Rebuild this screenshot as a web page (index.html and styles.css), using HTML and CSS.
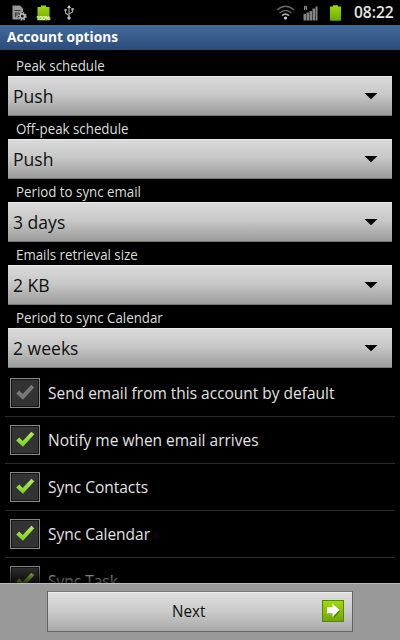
FILE: index.html
```
<!DOCTYPE html>
<html lang="en">
<head>
<meta charset="utf-8">
<title>Account options</title>
<link rel="stylesheet" href="styles.css">
</head>
<body>
<svg class="defs" width="0" height="0">
  <defs>
    <linearGradient id="green" x1="0" y1="0" x2="0" y2="1"><stop offset="0" stop-color="#b4ec62"/><stop offset="1" stop-color="#7fd01c"/></linearGradient>
    <linearGradient id="cell" x1="0" y1="0" x2="0" y2="1"><stop offset="0" stop-color="#9cdb0c"/><stop offset="1" stop-color="#71a800"/></linearGradient>
    <symbol id="tick" viewBox="0 0 30 30"><path d="M6.200 15.500l3.100-2.900 3.400 3.400 8.700-9.300 2.900 2.600-11.400 12.400z"/></symbol>
  </defs>
</svg>
<div class="screen">
  <header class="status">
    <svg class="ic-sim" width="15" height="16" viewBox="0 0 15 16"><path d="M.5.5H8l3 3V8l-3 6.500H.5z" fill="#989898"/><path d="M2.500 5.500h6M3.500 12V8h3.500M3.500 10h3" stroke="#3a3a3a" stroke-width="1.100" fill="none"/><circle cx="10.300" cy="11.300" r="4.300" fill="#1b1b1b"/><circle cx="10.300" cy="11.300" r="3.500" fill="none" stroke="#bbb" stroke-width="1.600" stroke-dasharray="1.500 1.250"/><circle cx="10.300" cy="11.300" r="2.200" fill="none" stroke="#bbb" stroke-width="1.500"/></svg>
    <span class="full"><svg width="13" height="16" viewBox="0 0 13 16"><path d="M.5 2H4V.5h5V2h3.500v13.500H.5z" fill="url(#cell)"/></svg><b>100%</b></span>
    <svg class="ic-usb" width="10" height="15" viewBox="0 0 10 15"><path d="M5 2v11M1.500 5v3L5 10.500M8.500 4v3L5 9" fill="none" stroke="#aaa" stroke-width="1.100"/><path d="M5 0l2 3H3z" fill="#ccc"/><circle cx="1.500" cy="5" r="1.300" fill="#aaa"/><path d="M7.300 3h2.400v2.400H7.300z" fill="#aaa"/><circle cx="5" cy="13" r="1.700" fill="#bbb"/></svg>
    <svg class="ic-wifi" width="19" height="15" viewBox="0 0 19 15"><path d="M1 5q8.500-7.500 17 0M3.500 8q6-5 12 0" fill="none" stroke="#666" stroke-width="1.500"/><path d="M6 10.700q3.500-3 7 0" fill="none" stroke="#aaa" stroke-width="1.600"/><circle cx="9.500" cy="13" r="1.500" fill="#ddd"/></svg>
    <svg class="ic-signal" width="15" height="16" viewBox="0 0 15 16"><path d="M.5 15.500V9H3v6.500zM3.500 15.500V7.500H6v8zM6.500 15.500V6H9v9.500zM9.500 15.500V3.500H12v12zM12.500 15.500V1.500H14.500v14z" fill="#858585"/><path d="M1.500 5V1.300H3.500V5M1.500 3h2" stroke="#aaa" fill="none" stroke-width=".8"/></svg>
    <svg class="ic-batt" width="13" height="16" viewBox="0 0 13 16"><path d="M1.500 1.500H4V.3h5v1.200h2.500q.5 0 .5.500v13q0 .7-.7.700H1.700Q1 15.700 1 15V2q0-.5.5-.5z" fill="url(#cell)"/></svg>
    <span class="clock">08:22</span>
  </header>
  <h1><span>Account options</span></h1>
  <main>
    <section class="field"><label><span>Peak schedule</span></label><div class="select"><span>Push</span><svg width="14" height="8" viewBox="0 0 14 8"><path d="M.5 1h13L7 7.300z"/></svg></div></section>
    <section class="field"><label><span>Off-peak schedule</span></label><div class="select"><span>Push</span><svg width="14" height="8" viewBox="0 0 14 8"><path d="M.5 1h13L7 7.300z"/></svg></div></section>
    <section class="field"><label><span>Period to sync email</span></label><div class="select"><span>3 days</span><svg width="14" height="8" viewBox="0 0 14 8"><path d="M.5 1h13L7 7.300z"/></svg></div></section>
    <section class="field"><label><span>Emails retrieval size</span></label><div class="select"><span>2 KB</span><svg width="14" height="8" viewBox="0 0 14 8"><path d="M.5 1h13L7 7.300z"/></svg></div></section>
    <section class="field"><label><span>Period to sync Calendar</span></label><div class="select"><span>2 weeks</span><svg width="14" height="8" viewBox="0 0 14 8"><path d="M.5 1h13L7 7.300z"/></svg></div></section>
    <div class="checks">
      <div class="row"><i class="box off"><svg width="30" height="30"><use href="#tick"/></svg></i><span>Send email from this account by default</span></div>
      <div class="row"><i class="box"><svg width="30" height="30"><use href="#tick"/></svg></i><span>Notify me when email arrives</span></div>
      <div class="row"><i class="box"><svg width="30" height="30"><use href="#tick"/></svg></i><span>Sync Contacts</span></div>
      <div class="row"><i class="box"><svg width="30" height="30"><use href="#tick"/></svg></i><span>Sync Calendar</span></div>
      <div class="row"><i class="box"><svg width="30" height="30"><use href="#tick"/></svg></i><span>Sync Task</span></div>
    </div>
  </main>
  <footer><div class="next"><span>Next</span><svg width="22" height="22" viewBox="0 0 22 22"><path d="M0 0h22v22H0z" fill="#5d8500"/><path d="M1 1h20v20H1z" fill="url(#cell)"/><path d="M6 8.500h6V4.500l6 6.500-6 7v-4H6z" fill="#517700"/><path d="M5 7h5.500V3.500l7 6.500-7 7v-3.500H5z" fill="#fff"/></svg></div></footer>
</div>
</body>
</html>
```
FILE: styles.css
```
* { box-sizing: border-box; }
body { margin: 0; background: #000; font-family: "Open Sans", "Noto Sans", sans-serif; }
.defs { position: absolute; }
.screen { width: 400px; height: 640px; display: flex; flex-direction: column; overflow: hidden; }
.screen span { white-space: nowrap; transform-origin: 0 50%; }
.status { height: 25px; flex: none; display: flex; align-items: center; padding: 0 6px 0 12px; }
.full { position: relative; width: 13px; height: 16px; margin-left: 10px; }
.full svg { display: block; }
.full b { position: absolute; left: -1px; bottom: -1px; font-size: 6px; line-height: 7px; color: #efffc8; width: 15px; letter-spacing: -.4px; }
.ic-usb { margin-left: 14px; }
.ic-wifi { margin-left: auto; }
.ic-signal { margin-left: 8px; }
.ic-batt { margin-left: 11px; }
.clock { margin-left: 12px; width: 40px; font-size: 16px; font-weight: 600; color: #e5e5e5; line-height: 25px; transform: scaleX(.97); }
h1 { height: 25px; margin: 0; flex: none; padding-left: 7px; font-size: 14px; line-height: 24px; color: #fff; background: linear-gradient(#426b9c, #2c4c7b); }
h1 span { display: inline-block; transform: scaleX(.977); }
main { flex: 1; min-height: 0; padding-top: 3px; overflow: hidden; position: relative; }
main::after { content: ""; position: absolute; left: 0; right: 0; bottom: 0; height: 18px; background: linear-gradient(transparent, rgba(0, 0, 0, .75)); }
.field { height: 63px; padding: 0 8px; }
.field label { display: block; height: 23px; line-height: 25px; padding-left: 7.500px; font-size: 14px; color: #ddd; }
.field label span, .select span, .row span, .next span { display: inline-block; }
.field label span { transform: scaleX(.95); }
.select { height: 40px; display: flex; align-items: center; justify-content: space-between; padding: 0 14px 0 5px; border: solid #e9e9e9; border-width: 1px 0; border-bottom-color: #777; background: linear-gradient(#dadada, #c8c8c8 45%, #9c9c9c); font-size: 18px; color: #111; }
.select span { transform: scaleX(.975); }
.checks { padding: 2px 5px 0; }
.row { height: 47px; display: flex; align-items: center; padding-left: 5px; gap: 7.500px; font-size: 16.500px; color: #e2e2e2; border-bottom: 1px solid #2b2b2b; }
.row span { transform: scaleX(.938); padding-bottom: 2px; }
.box { flex: none; width: 30px; height: 30px; border: 1px solid #888; background: #333; box-shadow: inset 0 0 0 1px #151515; }
.box svg { display: block; margin: -1px; fill: url(#green); }
.box.off svg { fill: #777; }
footer { height: 57px; flex: none; background: #999; border-top: 1px solid #bbb; padding: 7px 47px 0; }
.next { height: 41px; border: 1px solid #666; border-top-color: #777; box-shadow: inset 0 1px #eee; background: linear-gradient(#e0e0e0, #cacaca 50%, #a9a9a9); display: flex; align-items: center; justify-content: space-between; padding: 0 8px 2px 124px; font-size: 16.500px; color: #111; }
.next span { transform: scaleX(.92); }
```
